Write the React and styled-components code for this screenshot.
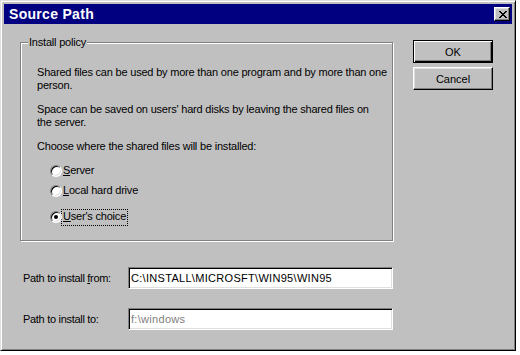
import React from 'react';
import styled, { createGlobalStyle } from 'styled-components';

const Global = createGlobalStyle`
  html, body { margin: 0; padding: 0; background: #ffffff; }
  body {
    font-family: "Liberation Sans", Arial, sans-serif;
    font-size: 11px;
    color: #000;
  }
  * { box-sizing: border-box; }
`;

const Window = styled.div`
  width: 516px;
  height: 351px;
  background: #c0c0c0;
  border: 1px solid;
  border-color: #dfdfdf #000 #000 #dfdfdf;
  box-shadow: inset 1px 1px #fff, inset -1px -1px #808080;
  padding: 3px;
  display: flex;
  flex-direction: column;
`;

const TitleBar = styled.div`
  height: 20px;
  background: #000080;
  color: #fff;
  display: flex;
  align-items: center;
  justify-content: space-between;
  padding: 0 2px 0 5px;
  font-weight: bold;
  font-size: 14px;
  letter-spacing: 0.3px;
`;

const CloseButton = styled.div`
  width: 16px;
  height: 14px;
  background: #c0c0c0;
  border: 1px solid;
  border-color: #fff #000 #000 #fff;
  box-shadow: inset -1px -1px #808080, inset 1px 1px #dfdfdf;
  display: flex;
  align-items: center;
  justify-content: center;
  padding-left: 1px;
`;

const Body = styled.div`
  display: flex;
  align-items: flex-start;
  gap: 20px;
  padding: 16px 19px 0 16px;
`;

const LeftColumn = styled.div`
  width: 373px;
  display: flex;
  flex-direction: column;
`;

const GroupBox = styled.div`
  position: relative;
  margin-top: 2px;
  height: 199px;
  border: 1px solid #808080;
  box-shadow: 1px 1px 0 #fff, inset 1px 1px 0 #fff;
  padding: 23px 4px 0 16px;
  letter-spacing: -0.2px;
`;

const Legend = styled.span`
  position: absolute;
  top: -7px;
  left: 7px;
  padding: 0 1px;
  line-height: 13px;
  background: #c0c0c0;
`;

const Para = styled.p`
  margin: 0 0 11px 0;
  line-height: 13px;
  white-space: nowrap;
`;

const RadioRow = styled.div`
  display: flex;
  align-items: center;
  height: 13px;
  margin-top: ${(p) => p.$gap}px;
  margin-left: 13px;
  gap: 1px;
  line-height: 13px;
`;

const Radio = styled.span`
  position: relative;
  width: 12px;
  height: 12px;
  border-radius: 50%;
  border: 1px solid;
  border-color: #808080 #fff #fff #808080;
  box-shadow: inset 1px 1px 0 #000, inset -1px -1px 0 #dfdfdf;
  background: #fff;
  flex: none;
  &::after {
    content: '';
    display: ${(p) => (p.$checked ? 'block' : 'none')};
    position: absolute;
    left: 3px;
    top: 3px;
    width: 4px;
    height: 4px;
    border-radius: 50%;
    background: #000;
  }
`;

const RadioLabel = styled.span`
  display: inline-block;
  line-height: 13px;
  padding: ${(p) => (p.$focused ? '0 1px 2px 1px' : '0')};
  border: ${(p) => (p.$focused ? '1px dotted #000' : 'none')};
  margin: ${(p) => (p.$focused ? '-1px -2px -3px -2px' : '0')};
`;

const PathRow = styled.div`
  display: grid;
  grid-template-columns: 108px 1fr;
  align-items: center;
  margin-top: ${(p) => p.$gap}px;
`;

const PathLabel = styled.span`
  padding-left: 3px;
  letter-spacing: -0.3px;
`;

const TextField = styled.div`
  height: 22px;
  background: #fff;
  border: 1px solid;
  border-color: #808080 #fff #fff #808080;
  box-shadow: inset 1px 1px 0 #000, inset -1px -1px 0 #dfdfdf;
  padding: 0 2px;
  display: flex;
  align-items: center;
  color: ${(p) => (p.$disabled ? '#808080' : '#000')};
  letter-spacing: 0.3px;
  white-space: nowrap;
  overflow: hidden;
`;

const ButtonColumn = styled.div`
  display: flex;
  flex-direction: column;
  gap: 4px;
`;

const Button = styled.div`
  width: 80px;
  height: 23px;
  display: flex;
  align-items: center;
  justify-content: center;
  background: #c0c0c0;
  border: 1px solid;
  border-color: ${(p) => (p.$default ? '#000' : '#fff #000 #000 #fff')};
  box-shadow: ${(p) =>
    p.$default
      ? 'inset 1px 1px 0 #fff, inset -1px -1px 0 #000, inset -2px -2px 0 #808080'
      : 'inset -1px -1px 0 #808080, inset 1px 1px 0 #dfdfdf'};
`;

const closeGlyph = [
  [0, 0, 2], [6, 0, 2],
  [1, 1, 2], [5, 1, 2],
  [2, 2, 4],
  [3, 3, 2],
  [2, 4, 4],
  [1, 5, 2], [5, 5, 2],
  [0, 6, 2], [6, 6, 2],
];

function CloseIcon() {
  return (
    <svg width="8" height="7" viewBox="0 0 8 7" shapeRendering="crispEdges">
      {closeGlyph.map(([x, y, w], i) => (
        <rect key={i} x={x} y={y} width={w} height={1} fill="#000" />
      ))}
    </svg>
  );
}

export default function App() {
  return (
    <>
      <Global />
      <Window>
        <TitleBar>
          <span>Source Path</span>
          <CloseButton>
            <CloseIcon />
          </CloseButton>
        </TitleBar>
        <Body>
          <LeftColumn>
            <GroupBox>
              <Legend>Install policy</Legend>
              <Para>
                Shared files can be used by more than one program and by more than one
                <br />
                person.
              </Para>
              <Para>
                Space can be saved on users' hard disks by leaving the shared files on
                <br />
                the server.
              </Para>
              <Para>Choose where the shared files will be installed:</Para>
              <RadioRow $gap={0}>
                <Radio />
                <RadioLabel>
                  <u>S</u>erver
                </RadioLabel>
              </RadioRow>
              <RadioRow $gap={7}>
                <Radio />
                <RadioLabel>
                  <u>L</u>ocal hard drive
                </RadioLabel>
              </RadioRow>
              <RadioRow $gap={13}>
                <Radio $checked />
                <RadioLabel $focused>
                  <u>U</u>ser's choice
                </RadioLabel>
              </RadioRow>
            </GroupBox>
            <PathRow $gap={26}>
              <PathLabel>
                Path to install <u>f</u>rom:
              </PathLabel>
              <TextField>C:\INSTALL\MICROSFT\WIN95\WIN95</TextField>
            </PathRow>
            <PathRow $gap={19}>
              <PathLabel>Path to install to:</PathLabel>
              <TextField $disabled>f:\windows</TextField>
            </PathRow>
          </LeftColumn>
          <ButtonColumn>
            <Button $default>OK</Button>
            <Button>Cancel</Button>
          </ButtonColumn>
        </Body>
      </Window>
    </>
  );
}
